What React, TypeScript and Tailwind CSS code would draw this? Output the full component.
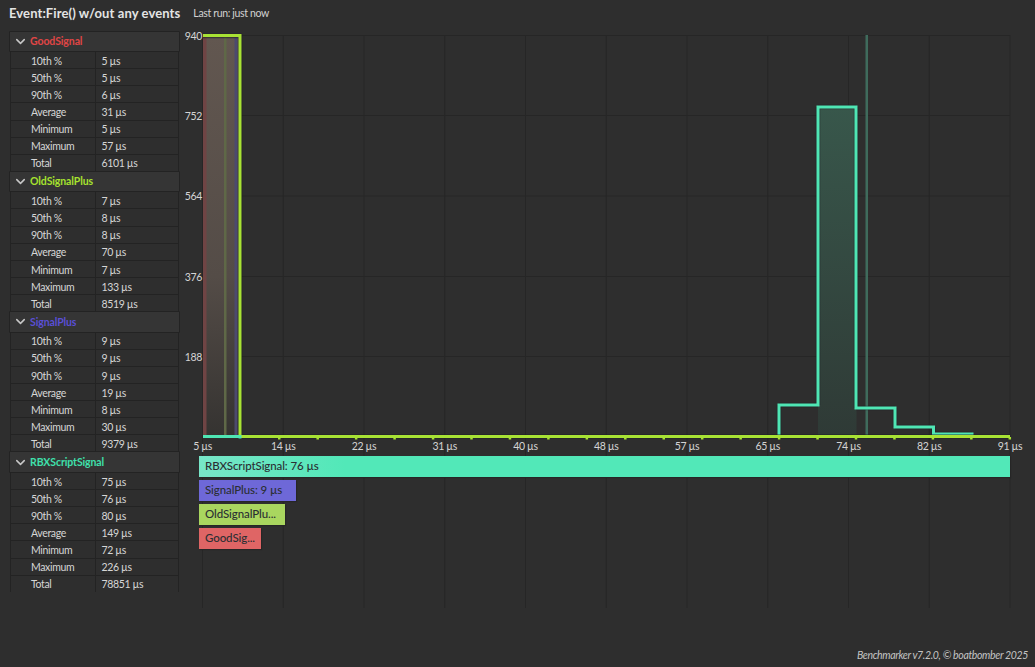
import { ChevronDown } from 'lucide-react';

const LABELS = ['10th %', '50th %', '90th %', 'Average', 'Minimum', 'Maximum', 'Total'];

const RESULTS = [
  { name: 'GoodSignal', color: 'text-[#e04545]', values: [5, 5, 6, 31, 5, 57, 6101] },
  { name: 'OldSignalPlus', color: 'text-[#a6e22e]', values: [7, 8, 8, 70, 7, 133, 8519] },
  { name: 'SignalPlus', color: 'text-[#5a4fd6]', values: [9, 9, 9, 19, 8, 30, 9379] },
  { name: 'RBXScriptSignal', color: 'text-[#3fe0ac]', values: [75, 76, 80, 149, 72, 226, 78851] },
];

const X_TICKS = [
  { label: '5 µs', x: 202.5 },
  { label: '14 µs', x: 283.3 },
  { label: '22 µs', x: 364 },
  { label: '31 µs', x: 444.8 },
  { label: '40 µs', x: 525.5 },
  { label: '48 µs', x: 606.3 },
  { label: '57 µs', x: 687 },
  { label: '65 µs', x: 767.8 },
  { label: '74 µs', x: 848.5 },
  { label: '82 µs', x: 929.3 },
  { label: '91 µs', x: 1010 },
];

const Y_TICKS = [
  { label: '940', y: 35.5 },
  { label: '752', y: 115.5 },
  { label: '564', y: 196 },
  { label: '376', y: 276.5 },
  { label: '188', y: 356.5 },
];

const BIN_TICKS = Array.from({ length: 20 }, (_, i) => 278 + i * 38.45);

// each step drawn on its own so the square caps overhang at the corners
const TEAL_STEPS =
  'M779 436V405M779 405H818M818 405V107M818 107H856M856 107V408M856 408H895M895 408V427M895 427H933.5M933.5 427V434M933.5 434H972';

const Chart = () => (
  <svg className="absolute inset-0" width="1035" height="667" viewBox="0 0 1035 667">
    <defs>
      <linearGradient id="fadeGood" x1="0" x2="0" y1="0" y2="1">
        <stop offset="0" stopColor="#625750" />
        <stop offset="0.6" stopColor="#544c47" />
        <stop offset="1" stopColor="#353331" />
      </linearGradient>
      <linearGradient id="fadeTeal" x1="0" x2="0" y1="0" y2="1">
        <stop offset="0" stopColor="#38574b" />
        <stop offset="1" stopColor="#2f3a36" />
      </linearGradient>
    </defs>
    {X_TICKS.map((t) => (
      <line key={t.x} x1={t.x} x2={t.x} y1="35" y2="608" stroke="#262626" />
    ))}
    {Y_TICKS.map((t) => (
      <line key={t.y} x1="203" x2="1010" y1={t.y} y2={t.y} stroke="#262626" />
    ))}
    <line x1="203" x2="1010" y1="436.5" y2="436.5" stroke="#262626" />

    <rect x="203" y="36" width="37" height="400" fill="url(#fadeGood)" />
    <rect x="203" y="36" width="3.5" height="400" fill="#6f4444" />
    <rect x="224" y="36" width="2.5" height="400" fill="#5f6847" />
    <rect x="234.5" y="36" width="3" height="400" fill="#4c4a6e" />
    <rect x="818" y="107" width="38.5" height="329" fill="url(#fadeTeal)" />
    <rect x="865.5" y="35" width="2.5" height="401" fill="#3f6b5c" />

    <path d={TEAL_STEPS} fill="none" stroke="#1c1c24" strokeOpacity="0.5" strokeWidth="4.5" />
    <path d={TEAL_STEPS} fill="none" stroke="#4fe6b4" strokeWidth="3" strokeLinecap="square" />
    <path d="M203 36H240V436.5H1010" fill="none" stroke="#1c1c24" strokeOpacity="0.55" strokeWidth="4.5" />
    <path d="M203 35.5H240V436.5H1010" fill="none" stroke="#a8e234" strokeWidth="3" />
    <path d="M203 436.5H240" fill="none" stroke="#4fe6b4" strokeWidth="3" />
    <rect x="238.5" y="435" width="3" height="3.5" fill="#4fe6b4" />
    {BIN_TICKS.map((x) => (
      <rect key={x} x={x} y="437" width="2.5" height="2.5" fill="#a8e234" />
    ))}

    {Y_TICKS.map((t) => (
      <text
        key={t.label}
        x="202"
        y={t.y + 4}
        textAnchor="end"
        className="fill-[#d4d4d4] text-[10.5px] tracking-[-0.35px]"
      >
        {t.label}
      </text>
    ))}
    {X_TICKS.map((t) => (
      <text
        key={t.label}
        x={t.x}
        y="450"
        textAnchor="middle"
        className="fill-[#d4d4d4] text-[10.5px] tracking-[-0.35px]"
      >
        {t.label}
      </text>
    ))}
  </svg>
);

const Bar = ({ label, color, width }: { label: string; color: string; width: string }) => (
  <div className={`h-[21px] ${width} ${color} pl-[6px] pb-[2px] flex items-center text-[11.5px] font-medium tracking-[-0.1px] text-[#2b2f33] shadow-[1px_1px_1px_#262626] whitespace-nowrap`}>
    {label}
  </div>
);

const ResultBlock = ({ result }: { result: (typeof RESULTS)[number] }) => (
  <div className="h-[140.33px] overflow-hidden">
    <div className="h-[21.5px] flex items-center bg-[#353535] border border-[#232323] rounded-[1px]">
      <ChevronDown className="ml-[3px] w-[15px] h-[15px] text-[#c8c8c8]" strokeWidth={2.4} />
      <span className={`ml-[2px] pt-px text-[10.5px] font-bold tracking-[-0.1px] ${result.color}`}>{result.name}</span>
    </div>
    <div className="mx-px border-x border-[#232323]">
      {LABELS.map((label, i) => (
        <div key={label} className="h-[17.14px] flex items-center border-b border-[#232323] text-[10.5px] tracking-[-0.35px] text-[#d6d6d6]">
          <div className="w-[84.5px] h-full flex items-center pl-[20px] pt-[3px] border-r border-[#232323]">{label}</div>
          <div className="pl-[6px] pt-[3px]">{result.values[i]} µs</div>
        </div>
      ))}
    </div>
  </div>
);

export default function App() {
  return (
    <div className="relative w-[1035px] h-[667px] overflow-hidden bg-[#2e2e2e] font-['Lato',sans-serif]">
      <Chart />
      <div className="relative flex flex-col h-full">
        <div className="h-[30.5px] pl-[9px] pb-[3px] flex items-center gap-[13px]">
          <h1 className="text-[13px] font-bold tracking-[0.1px] text-[#e4e4e4]">Event:Fire() w/out any events</h1>
          <span className="text-[10.5px] tracking-[-0.35px] text-[#d2d2d2]">Last run: just now</span>
        </div>
        <div className="flex flex-1">
          <div className="w-[171px] ml-[9px] h-[561.5px] overflow-hidden">
            {RESULTS.map((r) => (
              <ResultBlock key={r.name} result={r} />
            ))}
          </div>
          <div className="ml-[19px] mt-[425.5px] w-[811px] flex flex-col gap-[3px]">
            <Bar label="RBXScriptSignal: 76 µs" color="bg-[linear-gradient(90deg,#78e6c8,#52e8b8_18%)]" width="w-[811px]" />
            <Bar label="SignalPlus: 9 µs" color="bg-[#6e68d8]" width="w-[97px]" />
            <Bar label="OldSignalPlu..." color="bg-[#a9d65f]" width="w-[86px]" />
            <Bar label="GoodSig..." color="bg-[#df6565]" width="w-[62px]" />
          </div>
        </div>
        <div className="absolute right-[7px] bottom-[3px] text-[10.5px] italic tracking-[-0.35px] text-[#c4c4c4]">
          Benchmarker v7.2.0, © boatbomber 2025
        </div>
      </div>
    </div>
  );
}
